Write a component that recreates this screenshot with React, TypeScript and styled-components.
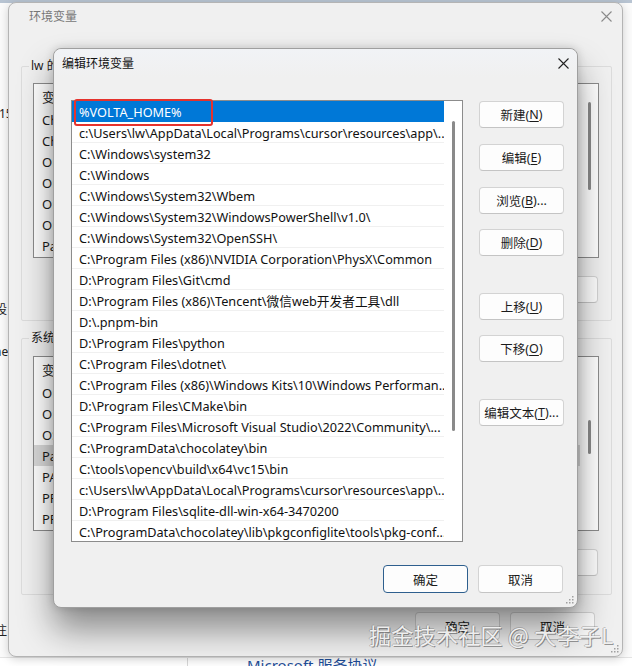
import React from "react";
import styled, { createGlobalStyle } from "styled-components";

const UI = `"Noto Sans", "Noto Sans CJK SC", sans-serif`;

const GlobalStyle = createGlobalStyle`
  html, body { margin: 0; padding: 0; background: #f4f4f4; }
  body { font-family: ${UI}; }
  * { box-sizing: border-box; }
`;

const Screen = styled.div`
  position: relative;
  width: 632px;
  height: 666px;
  overflow: hidden;
  background: linear-gradient(#b8c4d2 0, #b8c4d2 3px, #f6f6f6 3px);
  font-family: ${UI};
`;

/* ---------- page behind everything ---------- */
const BehindPage = styled.div`
  position: absolute;
  inset: 3px 0 0 0;
  background: #fbfbfb;
  display: flex;
  flex-direction: column;
  font-size: 12px;
  color: #222;
`;

const Frag = styled.div<{ $mt: number; $ml?: number }>`
  margin-top: ${(p) => p.$mt}px;
  margin-left: ${(p) => p.$ml ?? 0}px;
  line-height: 16px;
  white-space: nowrap;
`;

const BottomStrip = styled.div`
  margin-top: auto;
  height: 9px;
  display: flex;
  align-items: flex-start;
  overflow: hidden;
  border-top: 1px solid #e4e4e4;
  background: #fff;
`;

const StripCell = styled.div<{ $w: number }>`
  width: ${(p) => p.$w}px;
  height: 100%;
  border-right: 1px solid #d8d8d8;
`;

const Link = styled.div`
  margin-left: 59px;
  margin-top: -1px;
  color: #1f4f9a;
  font-size: 15px;
  line-height: 16px;
  white-space: nowrap;
`;

/* ---------- generic window parts ---------- */
const OuterWindow = styled.div`
  position: absolute;
  left: 8px;
  top: 2px;
  width: 615px;
  height: 655px;
  background: #f0f0f0;
  border: 1px solid #b4b4b4;
  border-radius: 8px;
  box-shadow: 0 2px 10px rgba(0, 0, 0, 0.18);
  display: flex;
  flex-direction: column;
  padding: 0 10px 0 12px;
`;

const TitleBar = styled.div<{ $h: number }>`
  height: ${(p) => p.$h}px;
  display: flex;
  align-items: center;
  justify-content: space-between;
  font-size: 12px;
  color: #1b1b1b;
  flex-shrink: 0;
`;

const TitleText = styled.span<{ $dim?: boolean }>`
  color: ${(p) => (p.$dim ? "#777" : "#111")};
  padding-left: 8px;
`;

const CloseBox = styled.span`
  width: 12px;
  height: 12px;
  display: flex;
  align-items: center;
  justify-content: center;
`;

const GroupBox = styled.div<{ $mt: number; $h: number }>`
  margin-top: ${(p) => p.$mt}px;
  height: ${(p) => p.$h}px;
  border: 1px solid #dcdcdc;
  border-radius: 2px;
  display: flex;
  flex-direction: column;
  flex-shrink: 0;
`;

const Legend = styled.div`
  margin: -9px 0 0 7px;
  padding: 0 2px;
  height: 16px;
  line-height: 16px;
  align-self: flex-start;
  background: #f0f0f0;
  font-size: 12px;
  color: #1b1b1b;
  white-space: nowrap;
`;

const VarList = styled.div<{ $mt: number }>`
  margin: ${(p) => p.$mt}px 12px 0 11px;
  height: 175px;
  border: 1px solid #8c8c8c;
  background: #fff;
  display: flex;
`;

const VarColumn = styled.div`
  flex: 1;
  display: flex;
  flex-direction: column;
  overflow: hidden;
`;

const VarHeader = styled.div`
  height: 25px;
  display: flex;
  align-items: center;
  padding-left: 8px;
  font-size: 13px;
  color: #222;
  flex-shrink: 0;
`;

const VarRow = styled.div<{ $hl?: boolean }>`
  height: 21px;
  display: flex;
  align-items: center;
  padding-left: 8px;
  font-size: 13px;
  color: #1b1b1b;
  background: ${(p) => (p.$hl ? "#d9d9d9" : "transparent")};
  white-space: nowrap;
  flex-shrink: 0;
`;

const ThinTrack = styled.div<{ $top: number; $len: number }>`
  width: 18px;
  display: flex;
  justify-content: center;
  padding-top: ${(p) => p.$top}px;
  &::before {
    content: "";
    width: 3px;
    height: ${(p) => p.$len}px;
    border-radius: 2px;
    background: #8a8a8a;
  }
`;

const ButtonRow = styled.div<{ $mt: number; $mr: number; $gap: number }>`
  margin: ${(p) => p.$mt}px ${(p) => p.$mr}px 0 0;
  display: flex;
  justify-content: flex-end;
  gap: ${(p) => p.$gap}px;
  flex-shrink: 0;
`;

const WinButton = styled.button<{ $w?: number; $h?: number; $default?: boolean; $mt?: number }>`
  width: ${(p) => p.$w ?? 85}px;
  height: ${(p) => p.$h ?? 27}px;
  margin-top: ${(p) => p.$mt ?? 0}px;
  flex-shrink: 0;
  background: #fdfdfd;
  border: 1px solid ${(p) => (p.$default ? "#2e5f8e" : "#d3d3d3")};
  border-bottom-color: ${(p) => (p.$default ? "#2e5f8e" : "#c4c4c4")};
  border-radius: 4px;
  font-family: ${UI};
  font-size: 12.5px;
  color: #1b1b1b;
  padding: 0;
  display: flex;
  align-items: center;
  justify-content: center;
  u { text-decoration: underline; text-underline-offset: 2px; }
`;

/* ---------- foreground dialog ---------- */
const Dialog = styled.div`
  position: absolute;
  left: 53px;
  top: 48px;
  width: 525px;
  height: 560px;
  background: #f0f0f0;
  border: 1px solid #9f9f9f;
  border-radius: 8px;
  box-shadow: 0 22px 34px rgba(0, 0, 0, 0.42), 0 0 10px rgba(0, 0, 0, 0.16);
  display: flex;
  flex-direction: column;
  padding: 0 14px 0 17px;
`;

const DialogTitleBar = styled(TitleBar)`
  background: linear-gradient(#f1f3f6, #f0f0f0);
  margin: 0 -14px 0 -17px;
  padding: 0 8px 0 0;
  border-radius: 8px 8px 0 0;
`;

const Body = styled.div`
  margin-top: 23px;
  display: flex;
  gap: 16px;
`;

const PathList = styled.div`
  position: relative;
  width: 392px;
  height: 442px;
  border: 1px solid #8c8c8c;
  background: #fff;
  display: flex;
`;

const PathRows = styled.div`
  flex: 1;
  display: flex;
  flex-direction: column;
  overflow: hidden;
`;

const PathRow = styled.div<{ $sel?: boolean }>`
  height: 21px;
  flex-shrink: 0;
  display: flex;
  align-items: center;
  padding-left: 7px;
  padding-top: 1px;
  font-size: 12.7px;
  white-space: nowrap;
  overflow: hidden;
  color: ${(p) => (p.$sel ? "#fff" : "#111")};
  background: ${(p) => (p.$sel ? "#0078d7" : "#fff")};
  border-bottom: 1px solid ${(p) => (p.$sel ? "#0078d7" : "#f0f0f0")};
`;

const RedMark = styled.div`
  position: absolute;
  left: 2px;
  top: -2px;
  width: 139px;
  height: 27px;
  border: 2px solid #e5322d;
  border-radius: 3px;
  pointer-events: none;
`;

const ButtonColumn = styled.div`
  display: flex;
  flex-direction: column;
  padding-top: 1px;
`;

const Footer = styled.div`
  margin-top: 23px;
  display: flex;
  justify-content: flex-end;
  gap: 10px;
`;

const Grip = styled.div`
  position: absolute;
  right: 3px;
  bottom: 3px;
  display: flex;
`;

const Watermark = styled.div`
  position: absolute;
  left: 369px;
  top: 620px;
  font-family: "Noto Sans CJK SC", sans-serif;
  font-size: 22px;
  line-height: 28px;
  color: rgba(250, 250, 250, 0.92);
  text-shadow: 1px 1px 0 rgba(70, 70, 70, 0.55), -1px 0 0 rgba(90, 90, 90, 0.35),
    0 -1px 0 rgba(90, 90, 90, 0.3);
  white-space: nowrap;
  letter-spacing: 0.3px;
  pointer-events: none;
`;

const CloseIcon = ({ color = "#222" }: { color?: string }) => (
  <svg width="11" height="11" viewBox="0 0 11 11">
    <path d="M0.5 0.5 L10.5 10.5 M10.5 0.5 L0.5 10.5" stroke={color} strokeWidth="1.1" fill="none" />
  </svg>
);

const GripIcon = () => (
  <svg width="9" height="9" viewBox="0 0 9 9">
    {[
      [7, 1],
      [7, 4],
      [4, 4],
      [7, 7],
      [4, 7],
      [1, 7],
    ].map(([x, y], i) => (
      <rect key={i} x={x} y={y} width="1.5" height="1.5" fill="#a0a0a0" />
    ))}
  </svg>
);

const userVars = [
  "ChocolateyLastPathUpdate",
  "ChocolateyToolsLocation",
  "OneDrive",
  "OneDriveConsumer",
  "OneDriveCommercial",
  "OnlineServices",
  "Path",
];

const sysVars = [
  "OneAPI_ROOT",
  "OnlineServices",
  "OS",
  "Path",
  "PATHEXT",
  "PROCESSOR_ARCHITECTURE",
  "PROCESSOR_IDENTIFIER",
];

const paths = [
  "%VOLTA_HOME%",
  "c:\\Users\\lw\\AppData\\Local\\Programs\\cursor\\resources\\app\\...",
  "C:\\Windows\\system32",
  "C:\\Windows",
  "C:\\Windows\\System32\\Wbem",
  "C:\\Windows\\System32\\WindowsPowerShell\\v1.0\\",
  "C:\\Windows\\System32\\OpenSSH\\",
  "C:\\Program Files (x86)\\NVIDIA Corporation\\PhysX\\Common",
  "D:\\Program Files\\Git\\cmd",
  "D:\\Program Files (x86)\\Tencent\\微信web开发者工具\\dll",
  "D:\\.pnpm-bin",
  "D:\\Program Files\\python",
  "C:\\Program Files\\dotnet\\",
  "C:\\Program Files (x86)\\Windows Kits\\10\\Windows Performan...",
  "D:\\Program Files\\CMake\\bin",
  "C:\\Program Files\\Microsoft Visual Studio\\2022\\Community\\...",
  "C:\\ProgramData\\chocolatey\\bin",
  "C:\\tools\\opencv\\build\\x64\\vc15\\bin",
  "c:\\Users\\lw\\AppData\\Local\\Programs\\cursor\\resources\\app\\...",
  "D:\\Program Files\\sqlite-dll-win-x64-3470200",
  "C:\\ProgramData\\chocolatey\\lib\\pkgconfiglite\\tools\\pkg-conf...",
];

const VarBox = ({
  legend,
  items,
  hl,
  thumbTop,
  thumbLen,
  mt,
  h,
  listMt,
}: {
  legend: string;
  items: string[];
  hl?: number;
  thumbTop: number;
  thumbLen: number;
  mt: number;
  h: number;
  listMt: number;
}) => (
  <GroupBox $mt={mt} $h={h}>
    <Legend>{legend}</Legend>
    <VarList $mt={listMt}>
      <VarColumn>
        <VarHeader>变量</VarHeader>
        {items.map((t, i) => (
          <VarRow key={i} $hl={i === hl}>
            {t}
          </VarRow>
        ))}
      </VarColumn>
      <ThinTrack $top={thumbTop} $len={thumbLen} />
    </VarList>
    <ButtonRow $mt={18} $mr={13} $gap={10}>
      <WinButton>新建(N)...</WinButton>
      <WinButton>编辑(E)...</WinButton>
      <WinButton>删除(D)</WinButton>
    </ButtonRow>
  </GroupBox>
);

export default function App() {
  return (
    <Screen>
      <GlobalStyle />
      <BehindPage>
        <Frag $mt={103} $ml={-1}>15</Frag>
        <Frag $mt={180} $ml={-5}>设</Frag>
        <Frag $mt={26} $ml={-6}>ne</Frag>
        <Frag $mt={263} $ml={-5}>注</Frag>
        <BottomStrip>
          <StripCell $w={188} />
          <Link>Microsoft 服务协议</Link>
        </BottomStrip>
      </BehindPage>

      <OuterWindow>
        <TitleBar $h={26}>
          <TitleText $dim>环境变量</TitleText>
          <CloseBox>
            <CloseIcon color="#8a8a8a" />
          </CloseBox>
        </TitleBar>
        <VarBox
          legend="lw 的用户变量(U)"
          items={userVars}
          thumbTop={18}
          thumbLen={88}
          mt={37}
          h={255}
          listMt={9}
        />
        <VarBox
          legend="系统变量(S)"
          items={sysVars}
          hl={3}
          thumbTop={63}
          thumbLen={34}
          mt={17}
          h={257}
          listMt={10}
        />
        <ButtonRow $mt={17} $mr={17} $gap={10}>
          <WinButton $h={28}>确定</WinButton>
          <WinButton $h={28}>取消</WinButton>
        </ButtonRow>
        <Grip>
          <GripIcon />
        </Grip>
      </OuterWindow>

      <Dialog>
        <DialogTitleBar $h={28}>
          <TitleText>编辑环境变量</TitleText>
          <CloseBox>
            <CloseIcon />
          </CloseBox>
        </DialogTitleBar>
        <Body>
          <PathList>
            <PathRows>
              {paths.map((p, i) => (
                <PathRow key={i} $sel={i === 0}>
                  {p}
                </PathRow>
              ))}
            </PathRows>
            <ThinTrack $top={20} $len={310} />
            <RedMark />
          </PathList>
          <ButtonColumn>
            <WinButton $w={85} $h={27}>
              新建(<u>N</u>)
            </WinButton>
            <WinButton $w={85} $h={27} $mt={16}>
              编辑(<u>E</u>)
            </WinButton>
            <WinButton $w={85} $h={27} $mt={16}>
              浏览(<u>B</u>)...
            </WinButton>
            <WinButton $w={85} $h={27} $mt={15}>
              删除(<u>D</u>)
            </WinButton>
            <WinButton $w={85} $h={27} $mt={37}>
              上移(<u>U</u>)
            </WinButton>
            <WinButton $w={85} $h={27} $mt={15}>
              下移(<u>O</u>)
            </WinButton>
            <WinButton $w={85} $h={27} $mt={37}>
              编辑文本(<u>T</u>)...
            </WinButton>
          </ButtonColumn>
        </Body>
        <Footer>
          <WinButton $w={85} $h={28} $default>
            确定
          </WinButton>
          <WinButton $w={85} $h={28}>
            取消
          </WinButton>
        </Footer>
        <Grip>
          <GripIcon />
        </Grip>
      </Dialog>

      <Watermark>掘金技术社区 @ 大李子L</Watermark>
    </Screen>
  );
}
